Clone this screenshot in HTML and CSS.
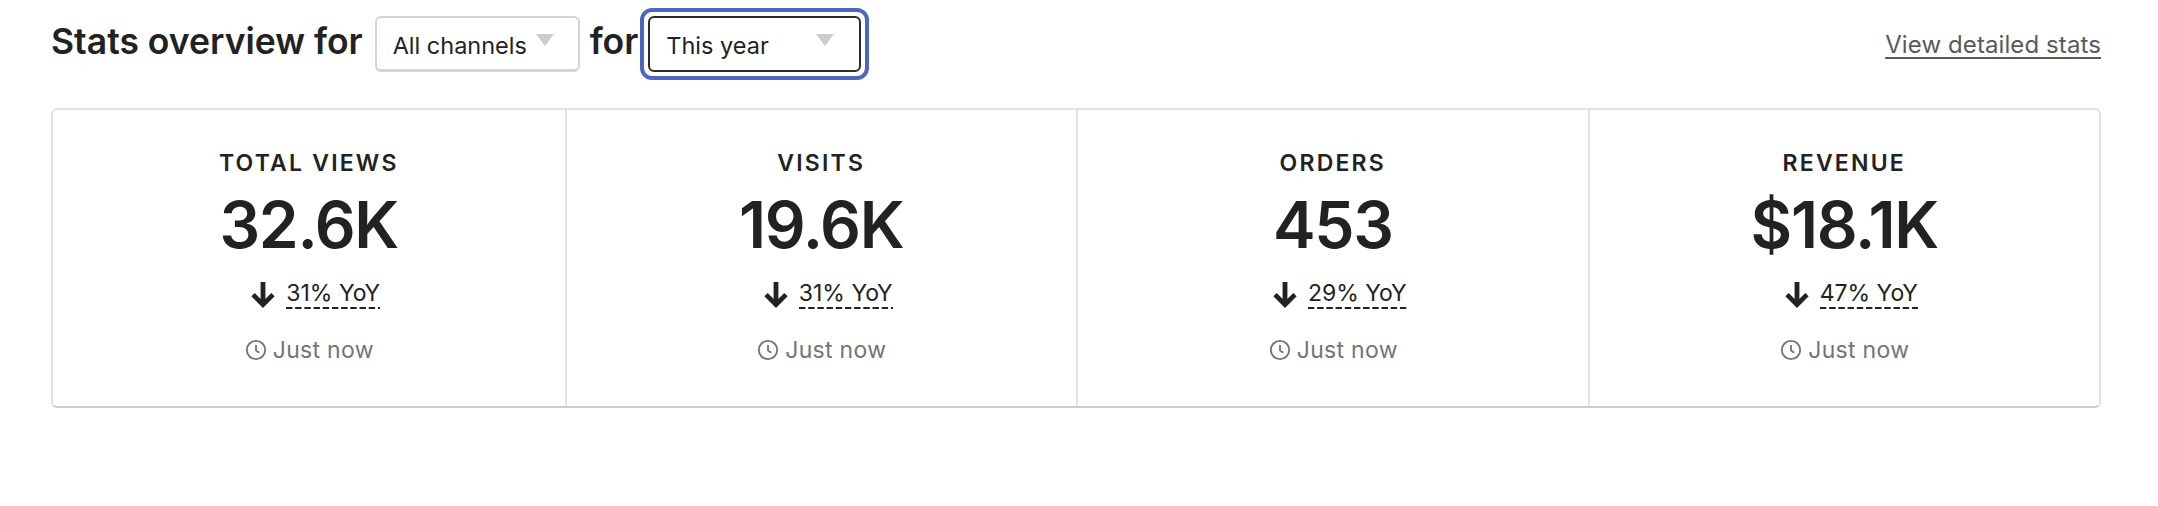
FILE: index.html
```html
<!DOCTYPE html>
<html lang="en">
<head>
    <meta charset="UTF-8">
    <title>Stats overview</title>
    <link rel="stylesheet" href="styles.css">
</head>
<body>
    <div class="container">
        <div class="header">
            <h1>Stats overview for</h1>
            <div class="select select-channels">
                <span>All channels</span>
                <i class="caret"></i>
            </div>
            <h1>for</h1>
            <div class="select-ring">
                <div class="select select-range">
                    <span>This year</span>
                    <i class="caret"></i>
                </div>
            </div>
            <a class="details" href="#">View detailed stats</a>
        </div>

        <div class="stats">
            <div class="stat">
                <div class="stat-label">TOTAL VIEWS</div>
                <div class="stat-value">32.6K</div>
                <div class="stat-change">
                    <svg class="arrow" viewBox="0 0 24 24"><path d="M12 3v17M4.5 12.5L12 20l7.5-7.5"/></svg>
                    <span class="yoy">31% YoY</span>
                </div>
                <div class="stat-time">
                    <svg class="clock" viewBox="0 0 24 24"><circle cx="12" cy="12" r="10"/><path d="M12 6.5V12.5l3.5 2.5"/></svg>
                    <span>Just now</span>
                </div>
            </div>
            <div class="stat">
                <div class="stat-label">VISITS</div>
                <div class="stat-value">19.6K</div>
                <div class="stat-change">
                    <svg class="arrow" viewBox="0 0 24 24"><path d="M12 3v17M4.5 12.5L12 20l7.5-7.5"/></svg>
                    <span class="yoy">31% YoY</span>
                </div>
                <div class="stat-time">
                    <svg class="clock" viewBox="0 0 24 24"><circle cx="12" cy="12" r="10"/><path d="M12 6.5V12.5l3.5 2.5"/></svg>
                    <span>Just now</span>
                </div>
            </div>
            <div class="stat">
                <div class="stat-label">ORDERS</div>
                <div class="stat-value">453</div>
                <div class="stat-change">
                    <svg class="arrow" viewBox="0 0 24 24"><path d="M12 3v17M4.5 12.5L12 20l7.5-7.5"/></svg>
                    <span class="yoy">29% YoY</span>
                </div>
                <div class="stat-time">
                    <svg class="clock" viewBox="0 0 24 24"><circle cx="12" cy="12" r="10"/><path d="M12 6.5V12.5l3.5 2.5"/></svg>
                    <span>Just now</span>
                </div>
            </div>
            <div class="stat">
                <div class="stat-label">REVENUE</div>
                <div class="stat-value">$18.1K</div>
                <div class="stat-change">
                    <svg class="arrow" viewBox="0 0 24 24"><path d="M12 3v17M4.5 12.5L12 20l7.5-7.5"/></svg>
                    <span class="yoy">47% YoY</span>
                </div>
                <div class="stat-time">
                    <svg class="clock" viewBox="0 0 24 24"><circle cx="12" cy="12" r="10"/><path d="M12 6.5V12.5l3.5 2.5"/></svg>
                    <span>Just now</span>
                </div>
            </div>
        </div>
    </div>
</body>
</html>
```

FILE: styles.css
```css
body {
    font-family: Inter, "Liberation Sans", sans-serif;
    margin: 0;
    padding: 0;
    background-color: #fff;
    color: #222;
}
.container {
    width: 2050px;
    margin-left: 51px;
}
.header {
    display: flex;
    align-items: center;
    height: 88px;
}
h1 {
    margin: 0;
    padding-bottom: 5px;
    font-size: 35.5px;
    font-weight: 560;
    line-height: 42px;
}
.select {
    box-sizing: border-box;
    display: flex;
    justify-content: space-between;
    height: 56px;
    padding: 11px 24px 0 16px;
    font-size: 23.5px;
    line-height: 34px;
    background: #fff;
    border-radius: 6px;
}
.select-channels {
    width: 205px;
    margin: 0 10px 0 12px;
    border: 2px solid #d4d4d4;
    border-bottom-width: 3px;
}
.select-ring {
    margin-left: 2px;
    padding: 4px;
    border: 4px solid #4d66c0;
    border-radius: 12px;
}
.select-range {
    width: 213px;
    padding-right: 25px;
    border: 2px solid #2b2b2b;
}
.caret {
    width: 0;
    height: 0;
    margin-top: 5px;
    border-left: 9px solid transparent;
    border-right: 9px solid transparent;
    border-top: 12px solid #ccc;
}
.details {
    margin-left: auto;
    font-size: 24px;
    letter-spacing: 0.1px;
    color: #595959;
    text-underline-offset: 4px;
    text-decoration-thickness: 2px;
}
.stats {
    display: grid;
    grid-template-columns: repeat(4, 1fr);
    box-sizing: border-box;
    height: 300px;
    margin-top: 20px;
    border: 2px solid #e1e3df;
    border-bottom-color: #ccc;
    border-radius: 6px;
}
.stat {
    display: flex;
    flex-direction: column;
    align-items: center;
    padding-top: 38px;
}
.stat + .stat {
    border-left: 2px solid #e1e3df;
}
.stat-label {
    font-size: 23px;
    font-weight: 600;
    letter-spacing: 2.2px;
    line-height: 30px;
}
.stat-value {
    font-size: 64px;
    font-weight: 600;
    letter-spacing: -1.3px;
    line-height: 80px;
    margin-top: 7px;
}
.stat-change {
    display: flex;
    align-items: center;
    gap: 7px;
    margin-top: 13px;
    padding-left: 10px;
    font-size: 23px;
}
.arrow {
    width: 32px;
    height: 32px;
    fill: none;
    stroke: #222;
    stroke-width: 3.6;
}
.yoy {
    padding-bottom: 2px;
    line-height: 28px;
    background: linear-gradient(to right, #222 6px, transparent 6px) 0 100% / 9.2px 2px repeat-x;
}
.stat-time {
    display: flex;
    align-items: center;
    gap: 6px;
    margin-top: 26px;
    padding-left: 1px;
    font-size: 23px;
    letter-spacing: 0.3px;
    color: #757575;
}
.clock {
    width: 22px;
    height: 22px;
    fill: none;
    stroke: #757575;
    stroke-width: 2;
}
```
